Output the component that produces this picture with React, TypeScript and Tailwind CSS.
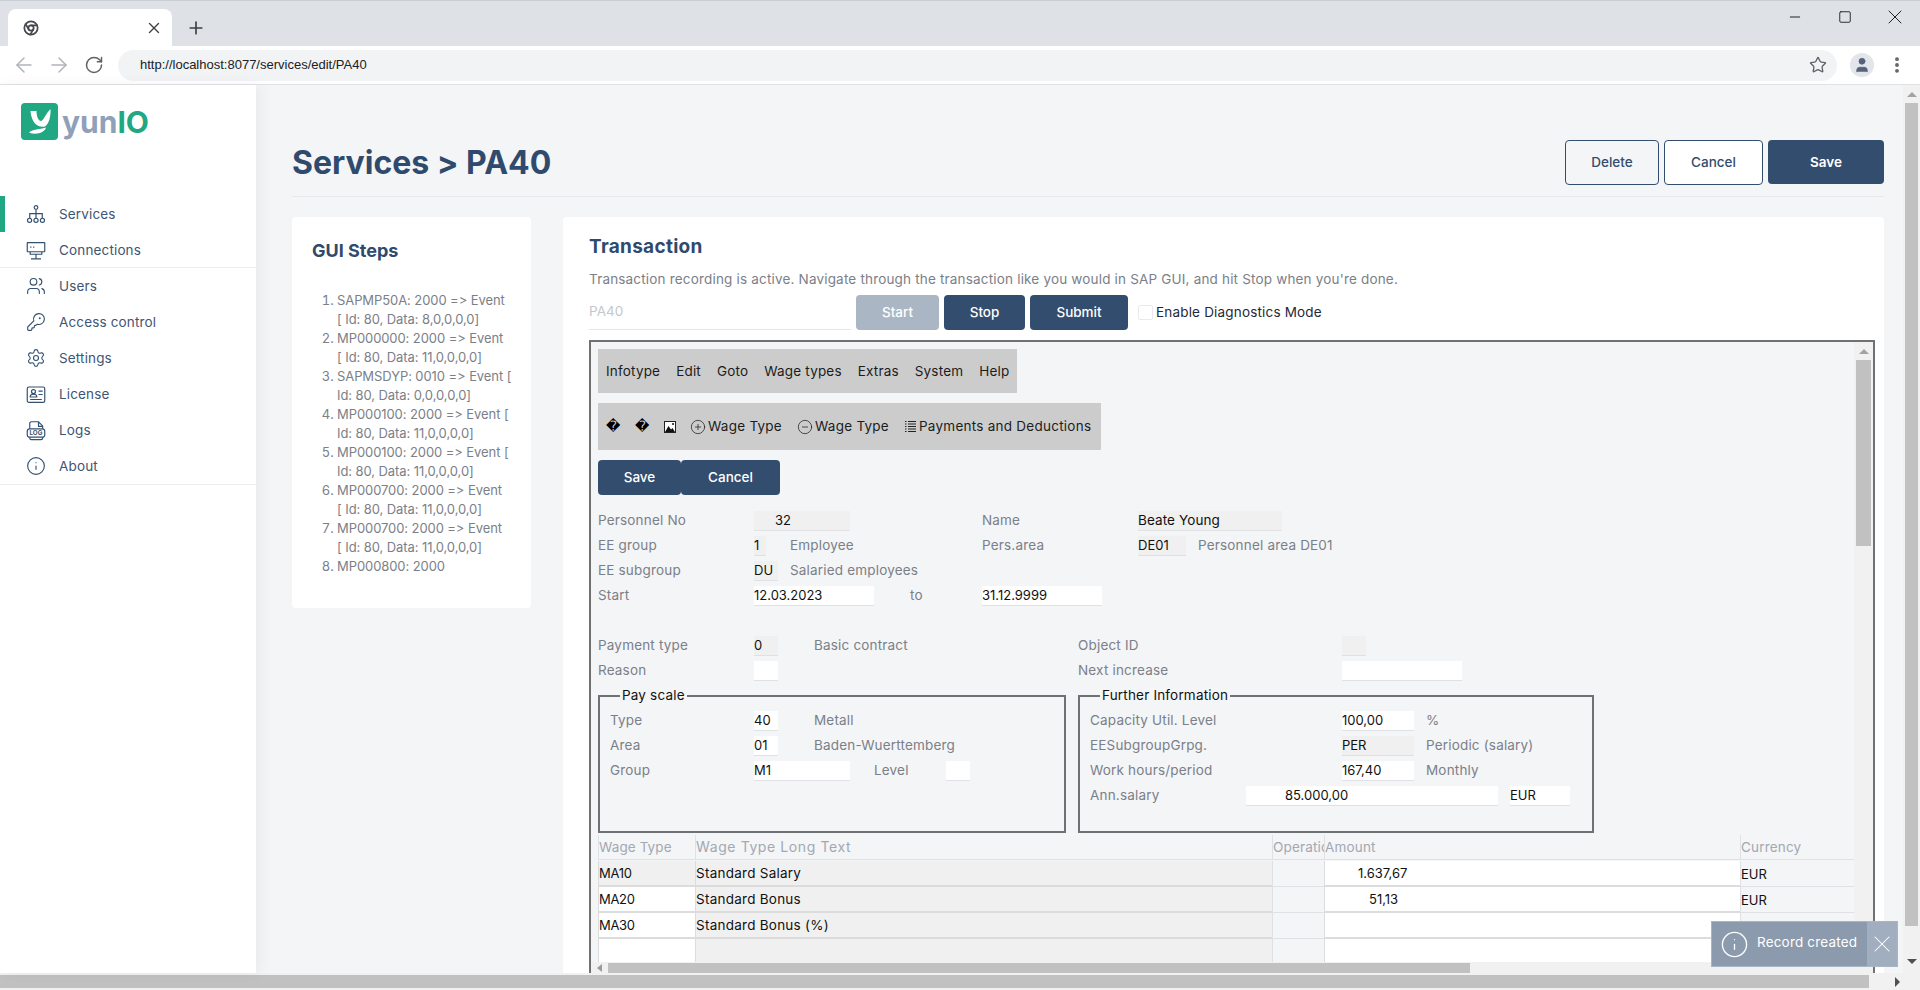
import React from "react";
import { ArrowLeft, ArrowRight, RotateCw, Star, X, Plus, Minus, Square, MoreVertical, User, Users, KeyRound, Settings, Info, CirclePlus, CircleMinus, Chrome } from "lucide-react";

const ServicesIcon = () => (
  <svg width="23" height="23" viewBox="0 0 24 24" fill="none" stroke="currentColor" strokeWidth="1.4">
    <circle cx="12" cy="3.500" r="2.200" />
    <path d="M12 5.700V16.500M12 11H4.500V16.500M12 11H19.500V16.500" />
    <circle cx="4.300" cy="19" r="2.500" />
    <circle cx="12" cy="19" r="2.500" />
    <circle cx="19.700" cy="19" r="2.500" />
  </svg>
);
const ConnIcon = () => (
  <svg width="23" height="23" viewBox="0 0 24 24" fill="none" stroke="currentColor" strokeWidth="1.4">
    <rect x="1.500" y="2.500" width="21" height="11" rx="0.500" />
    <path d="M5 8h1.500M8.500 8H10M12 16.500v5.500M6 22h12M5 13.500v3h14v-3" />
  </svg>
);
const LicenseIcon = () => (
  <svg width="23" height="23" viewBox="0 0 24 24" fill="none" stroke="currentColor" strokeWidth="1.4">
    <rect x="1.500" y="3" width="21" height="18.500" rx="2" />
    <circle cx="9" cy="8.500" r="2.400" />
    <path d="M5 15c0-2.500 1.800-3.500 4-3.500s4 1 4 3.500zM15 8h5M15 12h5M5 18h14" />
  </svg>
);
const LogsIcon = () => (
  <svg width="23" height="23" viewBox="0 0 24 24" fill="none" stroke="currentColor" strokeWidth="1.4">
    <path d="M4.500 10V3.500A2 2 0 0 1 6.500 1.500H15L20 6.500V10M4.500 20v1a2 2 0 0 0 2 2H18a2 2 0 0 0 2-2v-1M15 1.500V7h5" />
    <rect x="1.500" y="10" width="21" height="10" rx="3" />
    <text x="12" y="17.800" textAnchor="middle" fontSize="7.500" fontWeight="700" fill="currentColor" stroke="none" fontFamily="Inter, sans-serif">LOG</text>
  </svg>
);

const navA = [
  { t: "Services", i: <ServicesIcon />, on: true },
  { t: "Connections", i: <ConnIcon />, on: false },
];
const navB = [
  { t: "Users", i: <Users size={24} strokeWidth={1.35} />, on: false },
  { t: "Access control", i: <KeyRound size={24} strokeWidth={1.35} />, on: false },
  { t: "Settings", i: <Settings size={24} strokeWidth={1.35} />, on: false },
  { t: "License", i: <LicenseIcon />, on: false },
  { t: "Logs", i: <LogsIcon />, on: false },
  { t: "About", i: <Info size={24} strokeWidth={1.35} />, on: false },
];

function NavItem({ t, i, on }: { t: string; i: React.ReactNode; on: boolean }) {
  return (
    <div className={`flex items-center h-[36px] border-l-[5px] pl-[21px] gap-[13px] text-[13.5px] tracking-[0.15px] text-[#3f5573] ${on ? "border-[#22a783]" : "border-transparent"}`}>
      <span className="w-[20px] h-[20px] flex items-center justify-center text-[#34506f]">{i}</span>
      <span>{t}</span>
    </div>
  );
}

function L({ className = "", children }: { className?: string; children: React.ReactNode }) {
  return <div className={`flex items-center whitespace-nowrap text-[13.5px] tracking-[0.18px] text-[#7b8088] ${className}`}>{children}</div>;
}
function G({ className = "", children }: { className?: string; children?: React.ReactNode }) {
  return <div className={`self-center h-[20px] bg-[#f0f0f0] border-b border-[#dfe1e5] whitespace-nowrap leading-[19px] text-[#111] ${className}`}>{children}</div>;
}
function W({ className = "", children }: { className?: string; children?: React.ReactNode }) {
  return <div className={`self-center h-[20px] bg-white border-b border-[#dfe1e5] whitespace-nowrap leading-[19px] text-[#111] ${className}`}>{children}</div>;
}

const steps = [
  ["SAPMP50A: 2000 => Event", "[ Id: 80, Data: 8,0,0,0,0]"],
  ["MP000000: 2000 => Event", "[ Id: 80, Data: 11,0,0,0,0]"],
  ["SAPMSDYP: 0010 => Event [", "Id: 80, Data: 0,0,0,0,0]"],
  ["MP000100: 2000 => Event [", "Id: 80, Data: 11,0,0,0,0]"],
  ["MP000100: 2000 => Event [", "Id: 80, Data: 11,0,0,0,0]"],
  ["MP000700: 2000 => Event", "[ Id: 80, Data: 11,0,0,0,0]"],
  ["MP000700: 2000 => Event", "[ Id: 80, Data: 11,0,0,0,0]"],
  ["MP000800: 2000"],
];

const rows = [
  { w: "MA10", t: "Standard Salary", a: "1.637,67", pad: "pl-[33px]", c: "EUR", wBg: "bg-[#f0f0f0]" },
  { w: "MA20", t: "Standard Bonus", a: "51,13", pad: "pl-[44px]", c: "EUR", wBg: "bg-white" },
  { w: "MA30", t: "Standard Bonus (%)", a: "", pad: "", c: "EUR", wBg: "bg-white" },
  { w: "", t: "", a: "", pad: "", c: "", wBg: "bg-white" },
];

export default function App() {
  return (
    <div className="relative w-[1920px] h-[990px] overflow-hidden flex flex-col bg-white font-['Inter',sans-serif] [font-feature-settings:'calt'_0]">
      {/* tab strip */}
      <div className="h-[46px] shrink-0 bg-[#dee1e6] border-t border-[#c9ced4] flex items-end pl-[8px]">
        <div className="w-[164px] h-[37px] bg-white rounded-t-[8px] flex items-center justify-between pl-[15px] pr-[9px]">
          <Chrome size={16} strokeWidth={2.6} className="text-[#45484c]" />
          <X size={18} strokeWidth={1.8} className="text-[#3c4043]" />
        </div>
        <div className="h-[37px] flex items-center ml-[14px] text-[#3c4043]">
          <Plus size={20} strokeWidth={2} />
        </div>
        <div className="flex-1 self-start h-[31px] flex items-center justify-end pr-[13px] text-[#222]">
          <Minus size={16} strokeWidth={1.5} />
          <Square size={14} strokeWidth={1.6} className="ml-[35px]" />
          <X size={24} strokeWidth={1} className="ml-[31px]" />
        </div>
      </div>
      {/* toolbar */}
      <div className="h-[39px] shrink-0 bg-white border-b border-[#e0e2e5] flex items-center pl-[12px]">
        <ArrowLeft size={24} strokeWidth={1.5} className="text-[#b0b4b9]" />
        <ArrowRight size={24} strokeWidth={1.5} className="ml-[11px] text-[#b0b4b9]" />
        <RotateCw size={20} strokeWidth={1.8} className="ml-[13px] text-[#5f6368]" />
        <div className="ml-[14px] w-[1719px] h-[31px] rounded-full bg-[#f1f3f4] flex items-center justify-between pl-[22px] pr-[10px]">
          <span className="font-['Liberation_Sans',sans-serif] text-[13px] text-[#202124]">http://localhost:8077/services/edit/PA40</span>
          <Star size={18} strokeWidth={1.8} className="text-[#5f6368]" />
        </div>
        <div className="ml-[13px] w-[24px] h-[24px] rounded-full bg-[#e2e5e9] flex items-center justify-center">
          <User size={18} fill="#54637a" strokeWidth={1} className="text-[#54637a]" />
        </div>
        <MoreVertical size={20} strokeWidth={2.6} className="ml-[13px] text-[#5f6368]" />
      </div>
      {/* body */}
      <div className="flex-1 min-h-0 flex flex-col">
        <div className="flex-1 min-h-0 flex">
          <aside className="relative z-10 w-[256px] shrink-0 bg-white shadow-[4px_0_14px_rgba(0,0,0,0.05)] flex flex-col">
            <div className="h-[110px] shrink-0 flex items-start pt-[18px] pl-[21px] gap-[4px]">
              <svg width="37" height="37" viewBox="0 0 37 37">
                <rect width="37" height="37" rx="4" fill="#22a783" />
                <path d="M9.500 8H15.500C15.500 13 17 17.500 20 18C23 17 24.500 11 29.500 6C30 13 28 21 24 23.500C18 25 10.500 21 9.500 8Z" fill="#fff" />
                <path d="M8 29.500C12 26 18 26.500 25 24.500C24 29.500 15 32.500 8 29.500Z" fill="#fff" />
              </svg>
              <div className="text-[30px] leading-[38px] font-bold">
                <span className="text-[#8fa0b8]">yun</span>
                <span className="text-[#22a783]">IO</span>
              </div>
            </div>
            <div className="border-b border-[#eceef0] pt-[1px] h-[73px]">
              {navA.map((n) => <NavItem key={n.t} {...n} />)}
            </div>
            <div className="border-b border-[#eceef0] h-[217px]">
              {navB.map((n) => <NavItem key={n.t} {...n} />)}
            </div>
          </aside>

          <main className="flex-1 min-w-0 bg-[#f4f5f7] pl-[36px] pr-[19px] overflow-hidden">
            <div className="h-[112px] border-b border-[#e6e8eb] flex items-start justify-between pt-[55px]">
              <h1 className="text-[32px] leading-[45px] font-bold text-[#304a6d]">Services &gt; PA40</h1>
              <div className="flex gap-[5px] text-[13.5px] font-medium">
                <button className="w-[94px] h-[45px] rounded-[4px] border border-[#334d6e] text-[#334d6e]">Delete</button>
                <button className="w-[99px] h-[45px] rounded-[4px] border border-[#334d6e] bg-white text-[#334d6e]">Cancel</button>
                <button className="w-[116px] h-[44px] rounded-[4px] bg-[#334d6e] text-white font-semibold">Save</button>
              </div>
            </div>
            <div className="flex items-start gap-[32px] mt-[20px]">
              <section className="w-[239px] h-[391px] shrink-0 bg-white rounded-[4px] pl-[20px] pt-[22px]">
                <h2 className="text-[18px] leading-[24px] font-bold text-[#304a6d]">GUI Steps</h2>
                <ol className="mt-[28px] ml-[25px] list-decimal text-[13px] tracking-[-0.08px] leading-[19px] text-[#7b8088]">
                  {steps.map((s, i) => (
                    <li key={i} className="whitespace-nowrap">
                      {s[0]}
                      {s[1] ? <br /> : null}
                      {s[1]}
                    </li>
                  ))}
                </ol>
              </section>

              <section className="flex-1 min-w-0 bg-white rounded-[4px] pl-[26px] pr-[9px] pt-[18px] h-[800px]">
                <h2 className="text-[19px] leading-[24px] font-bold tracking-[0.3px] text-[#304a6d]">Transaction</h2>
                <p className="mt-[8px] text-[13.5px] tracking-[0.18px] leading-[24px] text-[#7b8088]">
                  Transaction recording is active. Navigate through the transaction like you would in SAP GUI, and hit Stop when you're done.
                </p>
                <div className="mt-[4px] flex items-center h-[35px] text-[13.5px]">
                  <div className="w-[262px] h-[35px] border-b border-[#e5e7eb] text-[#c4c7cc] leading-[33px]">PA40</div>
                  <button className="ml-[5px] w-[83px] h-[35px] rounded-[4px] bg-[#aab6c4] text-white font-medium">Start</button>
                  <button className="ml-[5px] w-[81px] h-[35px] rounded-[4px] bg-[#334d6e] text-white font-medium">Stop</button>
                  <button className="ml-[5px] w-[98px] h-[35px] rounded-[4px] bg-[#334d6e] text-white font-medium">Submit</button>
                  <span className="ml-[10px] w-[15px] h-[15px] rounded-[2px] border border-[#e8eaed] bg-white" />
                  <span className="ml-[3px] tracking-[0.18px] text-[#1f2937]">Enable Diagnostics Mode</span>
                </div>

                {/* embedded SAP GUI */}
                <div className="mt-[10px] h-[641px] border-2 border-[#6f7274] bg-[#f4f5f7] flex">
                  <div className="flex-1 min-w-0 flex flex-col">
                    <div className="h-[620px] overflow-hidden pl-[7px] pt-[7px] text-[13px] text-[#111]">
                      <div className="w-fit h-[44px] bg-[#cccccc] flex items-center gap-[16px] px-[8px] text-[13.5px] tracking-[0.18px] text-[#1c1c1c]">
                        <span>Infotype</span><span>Edit</span><span>Goto</span><span>Wage types</span><span>Extras</span><span>System</span><span>Help</span>
                      </div>
                      <div className="mt-[10px] w-[503px] h-[47px] bg-[#cccccc] flex items-center pl-[8px] text-[13.5px] tracking-[0.25px] text-[#1c1c1c]">
                        <span className="w-[29px] font-['DejaVu_Sans',sans-serif] text-[14px] text-black">�</span>
                        <span className="w-[29px] font-['DejaVu_Sans',sans-serif] text-[14px] text-black">�</span>
                        <svg className="w-[12px] h-[12px] mr-[14px]" viewBox="0 0 12 12">
                          <rect x="0.500" y="0.500" width="11" height="11" fill="#fff" stroke="#222" />
                          <path d="M1 11 L4.500 5 L7 8.500 L8.500 7 L11 11Z" fill="#111" />
                          <circle cx="9" cy="3" r="1" fill="#111" />
                        </svg>
                        <CirclePlus size={16} strokeWidth={1.1} />
                        <span className="ml-[2px] w-[76px]">Wage Type</span>
                        <CircleMinus size={16} strokeWidth={1.1} className="ml-[13px]" />
                        <span className="ml-[2px] w-[76px]">Wage Type</span>
                        <svg className="ml-[14px] w-[11px] h-[13px] mr-[3px]" viewBox="0 0 11 13" stroke="#222" strokeWidth="1">
                          <path d="M0 1.500h1.500M3 1.500h8M0 4h1.500M3 4h8M0 6.500h1.500M3 6.500h8M0 9h1.500M3 9h8M0 11.500h1.500M3 11.500h8" />
                        </svg>
                        <span className="whitespace-nowrap">Payments and Deductions</span>
                      </div>
                      <div className="mt-[10px] flex text-[13.5px] font-medium text-white">
                        <button className="w-[83px] h-[35px] rounded-[4px] bg-[#334d6e]">Save</button>
                        <button className="w-[99px] h-[35px] rounded-[4px] bg-[#334d6e]">Cancel</button>
                      </div>

                      <div className="mt-[13px] grid grid-cols-[repeat(105,12px)] auto-rows-[25px]">
                        <L className="row-start-1 col-start-1 col-span-13">Personnel No</L>
                        <G className="row-start-1 col-start-14 col-span-8 pl-[21px]">32</G>
                        <L className="row-start-1 col-start-33 col-span-13">Name</L>
                        <G className="row-start-1 col-start-46 col-span-12 text-[13.5px] tracking-[0.1px]">Beate Young</G>

                        <L className="row-start-2 col-start-1 col-span-13">EE group</L>
                        <G className="row-start-2 col-start-14 col-span-1">1</G>
                        <L className="row-start-2 col-start-17 col-span-16">Employee</L>
                        <L className="row-start-2 col-start-33 col-span-13">Pers.area</L>
                        <G className="row-start-2 col-start-46 col-span-4">DE01</G>
                        <L className="row-start-2 col-start-51 col-span-20">Personnel area DE01</L>

                        <L className="row-start-3 col-start-1 col-span-13">EE subgroup</L>
                        <G className="row-start-3 col-start-14 col-span-2">DU</G>
                        <L className="row-start-3 col-start-17 col-span-16">Salaried employees</L>

                        <L className="row-start-4 col-start-1 col-span-13">Start</L>
                        <W className="row-start-4 col-start-14 col-span-10">12.03.2023</W>
                        <L className="row-start-4 col-start-27 col-span-4">to</L>
                        <W className="row-start-4 col-start-33 col-span-10">31.12.9999</W>

                        <L className="row-start-6 col-start-1 col-span-13">Payment type</L>
                        <G className="row-start-6 col-start-14 col-span-2">0</G>
                        <L className="row-start-6 col-start-19 col-span-16">Basic contract</L>
                        <L className="row-start-6 col-start-41 col-span-20">Object ID</L>
                        <G className="row-start-6 col-start-63 col-span-2" />

                        <L className="row-start-7 col-start-1 col-span-13">Reason</L>
                        <W className="row-start-7 col-start-14 col-span-2" />
                        <L className="row-start-7 col-start-41 col-span-20">Next increase</L>
                        <W className="row-start-7 col-start-63 col-span-10" />

                        {/* Pay scale */}
                        <div className="relative row-start-8 row-span-6 col-start-1 col-span-39 mt-[12px] border-2 border-[#6f7274] pl-[10px] pt-[11px]">
                          <span className="absolute left-[20px] top-[-12px] px-[2px] bg-[#f4f5f7] text-[13.5px] tracking-[0.18px] leading-[20px] text-[#111]">Pay scale</span>
                          <div className="grid grid-cols-[repeat(37,12px)] auto-rows-[25px]">
                            <L className="row-start-1 col-start-1 col-span-12">Type</L>
                            <W className="row-start-1 col-start-13 col-span-2">40</W>
                            <L className="row-start-1 col-start-18 col-span-18">Metall</L>
                            <L className="row-start-2 col-start-1 col-span-12">Area</L>
                            <W className="row-start-2 col-start-13 col-span-2">01</W>
                            <L className="row-start-2 col-start-18 col-span-18">Baden-Wuerttemberg</L>
                            <L className="row-start-3 col-start-1 col-span-12">Group</L>
                            <W className="row-start-3 col-start-13 col-span-8">M1</W>
                            <L className="row-start-3 col-start-23 col-span-6">Level</L>
                            <W className="row-start-3 col-start-29 col-span-2" />
                          </div>
                        </div>

                        {/* Further Information */}
                        <div className="relative row-start-8 row-span-6 col-start-41 col-span-43 mt-[12px] border-2 border-[#6f7274] pl-[10px] pt-[11px]">
                          <span className="absolute left-[20px] top-[-12px] px-[2px] bg-[#f4f5f7] text-[13.5px] tracking-[0.18px] leading-[20px] text-[#111] whitespace-nowrap">Further Information</span>
                          <div className="grid grid-cols-[repeat(41,12px)] auto-rows-[25px]">
                            <L className="row-start-1 col-start-1 col-span-21">Capacity Util. Level</L>
                            <W className="row-start-1 col-start-22 col-span-6">100,00</W>
                            <L className="row-start-1 col-start-29 col-span-2">%</L>
                            <L className="row-start-2 col-start-1 col-span-21">EESubgroupGrpg.</L>
                            <G className="row-start-2 col-start-22 col-span-6">PER</G>
                            <L className="row-start-2 col-start-29 col-span-12">Periodic (salary)</L>
                            <L className="row-start-3 col-start-1 col-span-21">Work hours/period</L>
                            <W className="row-start-3 col-start-22 col-span-6">167,40</W>
                            <L className="row-start-3 col-start-29 col-span-12">Monthly</L>
                            <L className="row-start-4 col-start-1 col-span-13">Ann.salary</L>
                            <W className="row-start-4 col-start-14 col-span-21 pl-[39px]">85.000,00</W>
                            <W className="row-start-4 col-start-36 col-span-5">EUR</W>
                          </div>
                        </div>
                      </div>

                      {/* table */}
                      <div className="mt-[2px] grid grid-cols-[97px_577px_52px_416px_117px] auto-rows-[26px]">
                        <div className="h-[25px] border-l border-b border-[#dfe1e4] text-[13.5px] tracking-[0.1px] text-[#a3a8b1] leading-[24px] whitespace-nowrap">Wage Type</div>
                        <div className="h-[25px] border-l border-b border-[#dfe1e4] text-[14px] tracking-[0.6px] text-[#a3a8b1] leading-[24px] whitespace-nowrap">Wage Type Long Text</div>
                        <div className="h-[25px] border-l border-b border-[#dfe1e4] text-[13.5px] tracking-[0.18px] text-[#a3a8b1] leading-[24px] whitespace-nowrap overflow-hidden">Operation</div>
                        <div className="h-[25px] border-l border-b border-[#dfe1e4] text-[13.5px] tracking-[0.18px] text-[#a3a8b1] leading-[24px] whitespace-nowrap">Amount</div>
                        <div className="h-[25px] border-l border-b border-[#dfe1e4] text-[13.5px] tracking-[0.18px] text-[#a3a8b1] leading-[24px] whitespace-nowrap">Currency</div>
                        {rows.map((r) => (
                          <React.Fragment key={r.w + r.t}>
                            <div className={`border-l border-b-2 border-[#dcdcdc] ${r.wBg} leading-[24px] tracking-[-0.3px]`}>{r.w}</div>
                            <div className="border-l border-b-2 border-[#dcdcdc] bg-[#f0f0f0] leading-[24px] text-[13.5px] tracking-[0.25px]">{r.t}</div>
                            <div className="border-l border-b border-[#dfe1e4]" />
                            <div className={`border-l border-b-2 border-[#dcdcdc] bg-white leading-[24px] ${r.pad}`}>{r.a}</div>
                            <div className="border-l border-b border-[#dfe1e4] leading-[26px]">{r.c}</div>
                          </React.Fragment>
                        ))}
                      </div>
                    </div>
                    {/* inner horizontal scrollbar */}
                    <div className="h-[17px] bg-[#f1f1f1] flex items-start pt-[1px]">
                      <span className="w-[17px] h-[10px] flex items-center justify-center">
                        <span className="border-y-[4px] border-r-[5px] border-y-transparent border-r-[#9a9a9a]" />
                      </span>
                      <span className="w-[862px] h-[10px] bg-[#c1c1c1]" />
                    </div>
                  </div>
                  {/* inner vertical scrollbar */}
                  <div className="w-[19px] bg-[#f1f1f1] flex flex-col items-center">
                    <div className="h-[18px] flex items-center">
                      <span className="border-x-[5px] border-b-[5px] border-x-transparent border-b-[#a3a3a3]" />
                    </div>
                    <span className="w-[15px] h-[186px] bg-[#c1c1c1]" />
                  </div>
                </div>
              </section>
            </div>
          </main>

          {/* page vertical scrollbar */}
          <div className="w-[17px] shrink-0 bg-[#f1f1f1] flex flex-col items-center">
            <div className="h-[18px] flex items-center">
              <span className="border-x-[5px] border-b-[5px] border-x-transparent border-b-[#a3a3a3]" />
            </div>
            <span className="w-[13px] h-[823px] bg-[#c1c1c1]" />
            <span className="mt-[33px] border-x-[5px] border-t-[5px] border-x-transparent border-t-[#505050]" />
          </div>
        </div>
        {/* page horizontal scrollbar */}
        <div className="h-[17px] shrink-0 bg-[#f1f1f1] flex items-center pr-[20px]">
          <span className="w-[1869px] h-[13px] bg-[#c1c1c1]" />
          <span className="ml-auto border-y-[5px] border-l-[5px] border-y-transparent border-l-[#505050]" />
        </div>
      </div>

      {/* toast */}
      <div className="absolute left-[1711px] top-[921px] w-[187px] h-[46px] flex border border-[#aab5c4] text-white">
        <div className="w-[155px] shrink-0 bg-[#8c9aad] flex items-center pl-[8px] gap-[8px]">
          <Info size={29} strokeWidth={1.1} className="shrink-0" />
          <span className="text-[13.5px] tracking-[0.18px] whitespace-nowrap -mt-[4px]">Record created</span>
        </div>
        <div className="flex-1 bg-[#a0aec0] flex items-center justify-center">
          <X size={28} strokeWidth={0.9} />
        </div>
      </div>
    </div>
  );
}
